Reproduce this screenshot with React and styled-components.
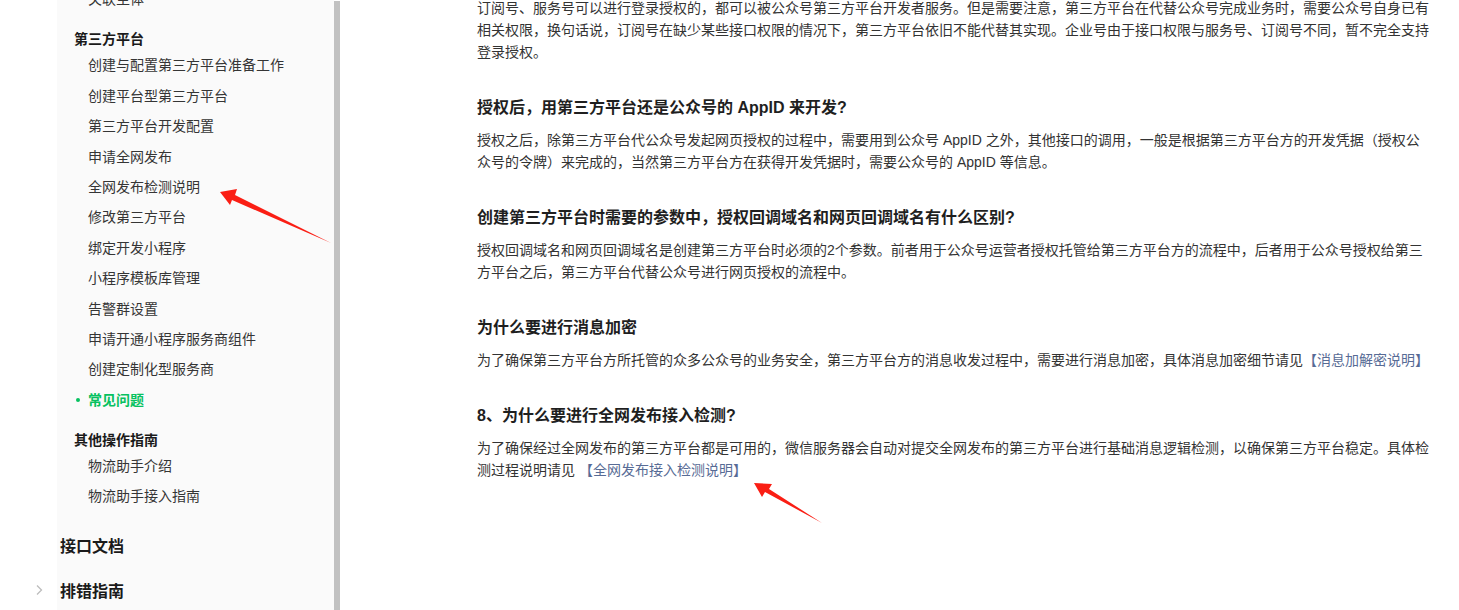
import React from "react";
import styled, { createGlobalStyle } from "styled-components";

const GlobalStyle = createGlobalStyle`
  html, body {
    margin: 0;
    padding: 0;
    background: #fff;
  }
  body {
    font-family: "Liberation Sans", "Noto Sans CJK SC", sans-serif;
    -webkit-font-smoothing: antialiased;
  }
`;

const Page = styled.div`
  position: relative;
  display: flex;
  width: 1459px;
  height: 610px;
  overflow: hidden;
  background: #fff;
`;

const Sidebar = styled.aside`
  width: 334px;
  flex-shrink: 0;
  background: linear-gradient(to right, #fff 57px, #fafafa 57px);
  overflow: hidden;
`;

const Nav = styled.nav`
  margin-top: -16px;
`;

const Group = styled.div`
  margin-top: ${(p) => (p.$first ? 0 : 14)}px;
`;

const GroupTitle = styled.div`
  height: 22px;
  line-height: 22px;
  padding-left: 74px;
  font-size: 14px;
  font-weight: 700;
  color: #1a1a1a;
`;

const Item = styled.div`
  position: relative;
  height: 30.4px;
  line-height: 30.4px;
  padding-left: 88px;
  font-size: 14px;
  font-weight: ${(p) => (p.$active ? 700 : 400)};
  color: ${(p) => (p.$active ? "#07c160" : "#353535")};
  white-space: nowrap;
  &::before {
    content: "";
    display: ${(p) => (p.$active ? "block" : "none")};
    position: absolute;
    left: 76px;
    top: 50%;
    width: 4px;
    height: 4px;
    margin-top: -2px;
    border-radius: 50%;
    background: #07c160;
  }
`;

const TopItem = styled.div`
  display: flex;
  align-items: center;
  height: 45px;
  margin-top: ${(p) => p.$gap || 0}px;
  font-size: 16px;
  font-weight: 700;
  color: #1a1a1a;
`;

const Chevron = styled.span`
  display: flex;
  align-items: center;
  width: 60px;
  padding-left: 35px;
  box-sizing: border-box;
  color: #bdbdbd;
`;

const Scrollbar = styled.div`
  width: 6px;
  flex-shrink: 0;
  margin-top: 1px;
  background: #c1c1c1;
`;

const Main = styled.main`
  padding-left: 137px;
  margin-top: -3px;
`;

const Article = styled.article`
  width: 955px;
  color: #333;
  font-size: 14px;
`;

const Heading = styled.h3`
  margin: 33px 0 9px;
  font-size: 16px;
  line-height: 24px;
  font-weight: 700;
  color: #1f1f1f;
`;

const Para = styled.p`
  margin: 0;
  line-height: 22px;
`;

const Link = styled.a`
  color: #576b95;
  text-decoration: none;
`;

const Marks = styled.svg`
  position: absolute;
  left: 0;
  top: 0;
  pointer-events: none;
`;

const ArrowRight = () => (
  <svg width="8" height="12" viewBox="0 0 8 12">
    <path d="M2 1.5 L6.5 6 L2 10.5" fill="none" stroke="currentColor" strokeWidth="1.3" />
  </svg>
);

const groups = [
  {
    title: "第三方平台",
    items: [
      "创建与配置第三方平台准备工作",
      "创建平台型第三方平台",
      "第三方平台开发配置",
      "申请全网发布",
      "全网发布检测说明",
      "修改第三方平台",
      "绑定开发小程序",
      "小程序模板库管理",
      "告警群设置",
      "申请开通小程序服务商组件",
      "创建定制化型服务商",
      "常见问题",
    ],
    active: "常见问题",
  },
  {
    title: "其他操作指南",
    items: ["物流助手介绍", "物流助手接入指南"],
  },
];

const App = () => {
  return (
    <>
      <GlobalStyle />
      <Page>
        <Sidebar>
          <Nav>
            <Group $first>
              <Item>关联主体</Item>
            </Group>
            {groups.map((g) => (
              <Group key={g.title}>
                <GroupTitle>{g.title}</GroupTitle>
                {g.items.map((it) => (
                  <Item key={it} $active={it === g.active}>
                    {it}
                  </Item>
                ))}
              </Group>
            ))}
            <TopItem $gap={10.5}>
              <Chevron />
              接口文档
            </TopItem>
            <TopItem>
              <Chevron>
                <ArrowRight />
              </Chevron>
              排错指南
            </TopItem>
          </Nav>
        </Sidebar>
        <Scrollbar />
        <Main>
          <Article>
            <Para>
              订阅号、服务号可以进行登录授权的，都可以被公众号第三方平台开发者服务。但是需要注意，第三方平台在代替公众号完成业务时，需要公众号自身已有相关权限，换句话说，订阅号在缺少某些接口权限的情况下，第三方平台依旧不能代替其实现。企业号由于接口权限与服务号、订阅号不同，暂不完全支持登录授权。
            </Para>
            <Heading>授权后，用第三方平台还是公众号的 AppID 来开发?</Heading>
            <Para>
              授权之后，除第三方平台代公众号发起网页授权的过程中，需要用到公众号 AppID 之外，其他接口的调用，一般是根据第三方平台方的开发凭据（授权公众号的令牌）来完成的，当然第三方平台方在获得开发凭据时，需要公众号的 AppID 等信息。
            </Para>
            <Heading>创建第三方平台时需要的参数中，授权回调域名和网页回调域名有什么区别?</Heading>
            <Para>
              授权回调域名和网页回调域名是创建第三方平台时必须的2个参数。前者用于公众号运营者授权托管给第三方平台方的流程中，后者用于公众号授权给第三方平台之后，第三方平台代替公众号进行网页授权的流程中。
            </Para>
            <Heading>为什么要进行消息加密</Heading>
            <Para>
              为了确保第三方平台方所托管的众多公众号的业务安全，第三方平台方的消息收发过程中，需要进行消息加密，具体消息加密细节请见
              <Link href="#">【消息加解密说明】</Link>
            </Para>
            <Heading>8、为什么要进行全网发布接入检测?</Heading>
            <Para>
              为了确保经过全网发布的第三方平台都是可用的，微信服务器会自动对提交全网发布的第三方平台进行基础消息逻辑检测，以确保第三方平台稳定。具体检测过程说明请见{" "}
              <Link href="#">【全网发布接入检测说明】</Link>
            </Para>
          </Article>
        </Main>
        <Marks width="1459" height="610" viewBox="0 0 1459 610">
          <polygon
            points="220,192 237,189 235,195 331,243 232,200 230,205"
            fill="#fa1e14"
          />
          <polygon
            points="754,483 772,484 769,489 822,523 765,492 762,497"
            fill="#fa1e14"
          />
        </Marks>
      </Page>
    </>
  );
};

export default App;
